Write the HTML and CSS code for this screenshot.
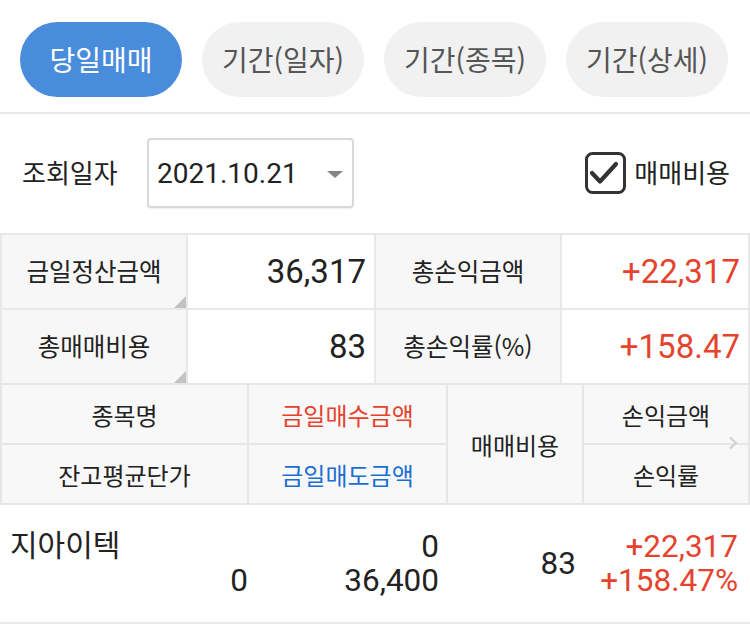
FILE: index.html
```html
<!DOCTYPE html>
<html lang="ko">
<head>
<meta charset="utf-8">
<link rel="stylesheet" href="styles.css">
</head>
<body>
<div class="tabs">
  <div class="tab active">당일매매</div>
  <div class="tab">기간(일자)</div>
  <div class="tab">기간(종목)</div>
  <div class="tab">기간(상세)</div>
</div>

<div class="query">
  <span class="qlabel">조회일자</span>
  <div class="select"><span class="seltext">2021.10.21</span><span class="caret"></span></div>
  <div class="chk">
    <svg class="box" width="42" height="43" viewBox="0 0 42 43">
      <rect x="1.5" y="1.5" width="38" height="39" rx="6" ry="6" fill="#fff" stroke="#333" stroke-width="3"/>
      <polyline points="7,21 15,29.5 31,12" fill="none" stroke="#333" stroke-width="4.2" stroke-linecap="round" stroke-linejoin="round"/>
    </svg>
    <span class="chklabel">매매비용</span>
  </div>
</div>

<div class="summary">
  <div class="lbl corner">금일정산금액</div>
  <div class="val">36,317</div>
  <div class="lbl">총손익금액</div>
  <div class="val red">+22,317</div>
  <div class="lbl corner">총매매비용</div>
  <div class="val">83</div>
  <div class="lbl">총손익률(%)</div>
  <div class="val red">+158.47</div>
</div>

<div class="head">
  <div class="hc">종목명</div>
  <div class="hc red">금일매수금액</div>
  <div class="hc span2">매매비용</div>
  <div class="hc">손익금액</div>
  <div class="hc">잔고평균단가</div>
  <div class="hc blue">금일매도금액</div>
  <div class="hc">손익률</div>
  <svg class="chev" width="10" height="14" viewBox="0 0 10 14"><polyline points="2,1.5 8,7 2,12.5" fill="none" stroke="#cfcfcf" stroke-width="2"/></svg>
</div>

<div class="data">
  <div class="dc c1">
    <div class="name">지아이텍</div>
    <div class="num">0</div>
  </div>
  <div class="dc c2">
    <div class="num">0</div>
    <div class="num">36,400</div>
  </div>
  <div class="dc c3">
    <div class="num">83</div>
  </div>
  <div class="dc c4">
    <div class="num red">+22,317</div>
    <div class="num red">+158.47%</div>
  </div>
</div>
</body>
</html>
```

FILE: styles.css
```css
html, body {
  margin: 0;
  padding: 0;
  background: #fff;
}
body {
  font-family: "Noto Sans CJK KR", sans-serif;
  color: #222;
  width: 750px;
}

.tabs {
  display: flex;
  gap: 20px;
  padding: 22px 20px 15px 20px;
  border-bottom: 2px solid #e8e8e8;
}
.tab {
  width: 162px;
  height: 75px;
  border-radius: 38px;
  background: #f1f1f1;
  color: #555;
  font-size: 28px;
  display: flex;
  align-items: center;
  justify-content: center;
  line-height: 1;
  padding-bottom: 2px;
  box-sizing: border-box;
}
.tab.active {
  background: #4a8cdc;
  color: #fff;
}

.query {
  display: flex;
  align-items: center;
  padding: 24px 20px 25px 22px;
  height: 70px;
}
.qlabel {
  font-size: 26px;
  width: 125px;
  padding-bottom: 4px;
}
.select {
  width: 186px;
  height: 66px;
  border: 2px solid #d9d9d9;
  border-radius: 4px;
  display: flex;
  align-items: center;
  justify-content: space-between;
  padding: 0 9px 0 8px;
  box-sizing: content-box;
  box-shadow: 0 1px 1px rgba(0,0,0,0.06);
}
.seltext {
  font-family: Roboto, "Noto Sans CJK KR", sans-serif;
  font-size: 28px;
  color: #222;
}
.caret {
  width: 0;
  height: 0;
  border-left: 8px solid transparent;
  border-right: 8px solid transparent;
  border-top: 7px solid #858585;
  margin-top: 2px;
}
.chk {
  margin-left: auto;
  display: flex;
  align-items: center;
  gap: 7px;
}
.chklabel {
  font-size: 26px;
  padding-bottom: 4px;
}

.summary {
  display: grid;
  grid-template-columns: 184px 186px 184px 186px;
  grid-auto-rows: 73px;
  gap: 2px;
  padding: 2px 2px 0 2px;
  background: #e8e8e8;
}
.lbl {
  background: #f7f7f7;
  font-size: 24.5px;
  display: flex;
  align-items: center;
  justify-content: center;
  position: relative;
  padding-bottom: 2px;
}
.corner::after {
  content: "";
  position: absolute;
  right: 0;
  bottom: 0;
  width: 12px;
  height: 12px;
  background: #c2c2c2;
  clip-path: polygon(100% 0, 100% 100%, 0 100%);
}
.val {
  background: #fff;
  font-family: Roboto, "Noto Sans CJK KR", sans-serif;
  font-size: 33px;
  display: flex;
  align-items: center;
  justify-content: flex-end;
  padding-right: 8px;
}
.red { color: #e5432e; }
.blue { color: #1b6fd2; }

.head {
  display: grid;
  grid-template-columns: 245px 197px 134px 164px;
  grid-template-rows: 58px 58px;
  gap: 2px;
  padding: 2px;
  background: #e6e6e6;
  position: relative;
}
.hc {
  background: #f8f8f8;
  font-size: 24px;
  display: flex;
  align-items: center;
  justify-content: center;
}
.span2 {
  grid-column: 3;
  grid-row: 1 / span 2;
}
.chev {
  position: absolute;
  right: 12px;
  top: 53px;
}

.data {
  display: grid;
  grid-template-columns: 249px 199px 136px 166px;
  height: 117px;
  border-bottom: 2px solid #ebebeb;
}
.dc {
  display: flex;
  flex-direction: column;
  justify-content: center;
  text-align: right;
}
.num {
  font-family: Roboto, "Noto Sans CJK KR", sans-serif;
  font-size: 31.5px;
  line-height: 34px;
}
.c1 {
  padding: 0 1px 0 10px;
}
.c1 .name {
  text-align: left;
  font-size: 30px;
  line-height: 34px;
  margin-top: -4px;
  margin-bottom: 4px;
}
.c2 { padding-right: 9px; }
.c3 { padding-right: 8px; }
.c4 { padding-right: 12px; }
```
